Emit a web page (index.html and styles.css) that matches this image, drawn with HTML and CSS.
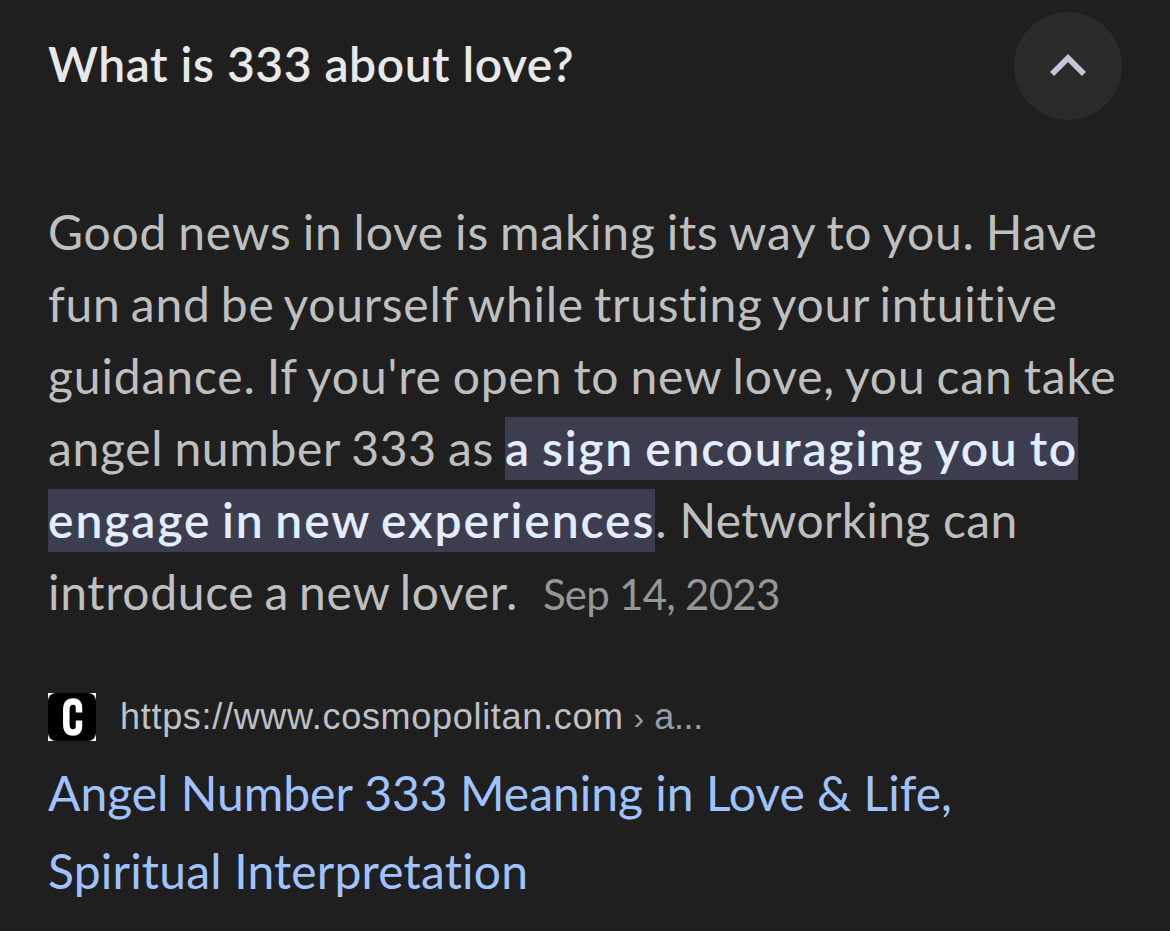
FILE: index.html
```html
<!DOCTYPE html>
<html lang="en">
<head>
    <meta charset="UTF-8">
    <meta name="viewport" content="width=device-width, initial-scale=1.0">
    <title>What is 333 about love?</title>
    <link rel="stylesheet" href="styles.css">
</head>
<body>
    <div class="panel">
        <div class="question">
            <h2 class="question-text">What is 333 about love?</h2>
            <button class="toggle" aria-label="Collapse">
                <svg width="36" height="24" viewBox="0 0 36 24">
                    <path d="M2 21 L18 5 L34 21" fill="none" stroke="#c8c5da" stroke-width="5.800"/>
                </svg>
            </button>
        </div>

        <div class="answer">
            <div class="line l1">Good news in love is making its way to you. Have</div>
            <div class="line l2">fun and be yourself while trusting your intuitive</div>
            <div class="line l3">guidance. If you're open to new love, you can take</div>
            <div class="line"><span class="l4">angel number 333 as </span><mark class="m1">a sign encouraging you to</mark></div>
            <div class="line"><mark class="m2">engage in new experiences</mark><span class="l5">. Networking can</span></div>
            <div class="line"><span class="l6">introduce a new lover.</span><span class="date">Sep 14, 2023</span></div>
        </div>

        <div class="source">
            <svg class="favicon" width="48" height="48" viewBox="0 0 48 48">
                <rect width="48" height="48" fill="#fff"/>
                <rect width="48" height="48" rx="8" fill="#000"/>
                <path d="M31 19.500 V15 Q31 8.500 25 8.500 Q18.300 8.500 18.300 17 V31 Q18.300 39.500 25 39.500 Q31 39.500 31 33 V27.500" fill="none" stroke="#fff" stroke-width="6.500"/>
            </svg>
            <div class="url">https://www.cosmopolitan.com<span class="arrow"> › </span><span class="crumb">a...</span></div>
        </div>

        <a class="title">
            <div class="t1">Angel Number 333 Meaning in Love &amp; Life,</div>
            <div class="t2">Spiritual Interpretation</div>
        </a>
    </div>
</body>
</html>
```

FILE: styles.css
```css
body {
    margin: 0;
    background-color: #1f1f1f;
    font-family: Lato, sans-serif;
    font-variant-ligatures: none;
}

.panel {
    padding: 12px 48px 0;
}

/* Question row */
.question {
    display: flex;
    justify-content: space-between;
    align-items: center;
    height: 108px;
}

.question-text {
    margin: 0;
    padding-bottom: 4px;
    font-size: 48px;
    font-weight: 600;
    letter-spacing: 0.52px;
    line-height: 60px;
    color: #e8e8e8;
}

.toggle {
    width: 108px;
    height: 108px;
    border: none;
    border-radius: 50%;
    background-color: #2a2a2a;
    padding: 0;
}

/* Answer text */
.answer {
    margin-top: 76px;
    font-size: 48px;
    color: #bfbfbf;
}

.line {
    height: 72px;
    line-height: 72px;
    white-space: pre;
}

.l1 {
    letter-spacing: 0.76px;
    word-spacing: -1.9px;
}

.l2 {
    letter-spacing: 0.74px;
    word-spacing: -2.8px;
}

.l3 {
    letter-spacing: 0.87px;
    word-spacing: -2.2px;
}

.l4 {
    letter-spacing: 0.7px;
    word-spacing: -2px;
}

.l5 {
    letter-spacing: 0.3px;
}

.l6 {
    letter-spacing: 0.67px;
    word-spacing: -2.9px;
}

mark {
    padding: 2px 0 4px;
    background-color: #3c3e4f;
    color: #e4ecff;
    font-weight: 600;
}

.m1 {
    letter-spacing: 1.76px;
    word-spacing: -2.5px;
}

.m2 {
    letter-spacing: 1.92px;
    word-spacing: -3.3px;
}

.date {
    margin-left: 25px;
    font-size: 42px;
    letter-spacing: -0.75px;
    color: #969696;
}

/* Source link */
.source {
    display: flex;
    align-items: center;
    gap: 24px;
    height: 48px;
    margin-top: 65px;
}

.url {
    font-family: "Liberation Sans", sans-serif;
    font-size: 36px;
    letter-spacing: 0.7px;
    color: #bdc1c6;
    white-space: pre;
}

.arrow {
    font-size: 32px;
    color: #9a9da2;
}

.crumb {
    letter-spacing: -0.4px;
    color: #9a9da2;
}

.title {
    display: block;
    margin-top: 13px;
    font-size: 48px;
    line-height: 78px;
    color: #a0c3ff;
}

.t2 {
    letter-spacing: 0.18px;
}
```
